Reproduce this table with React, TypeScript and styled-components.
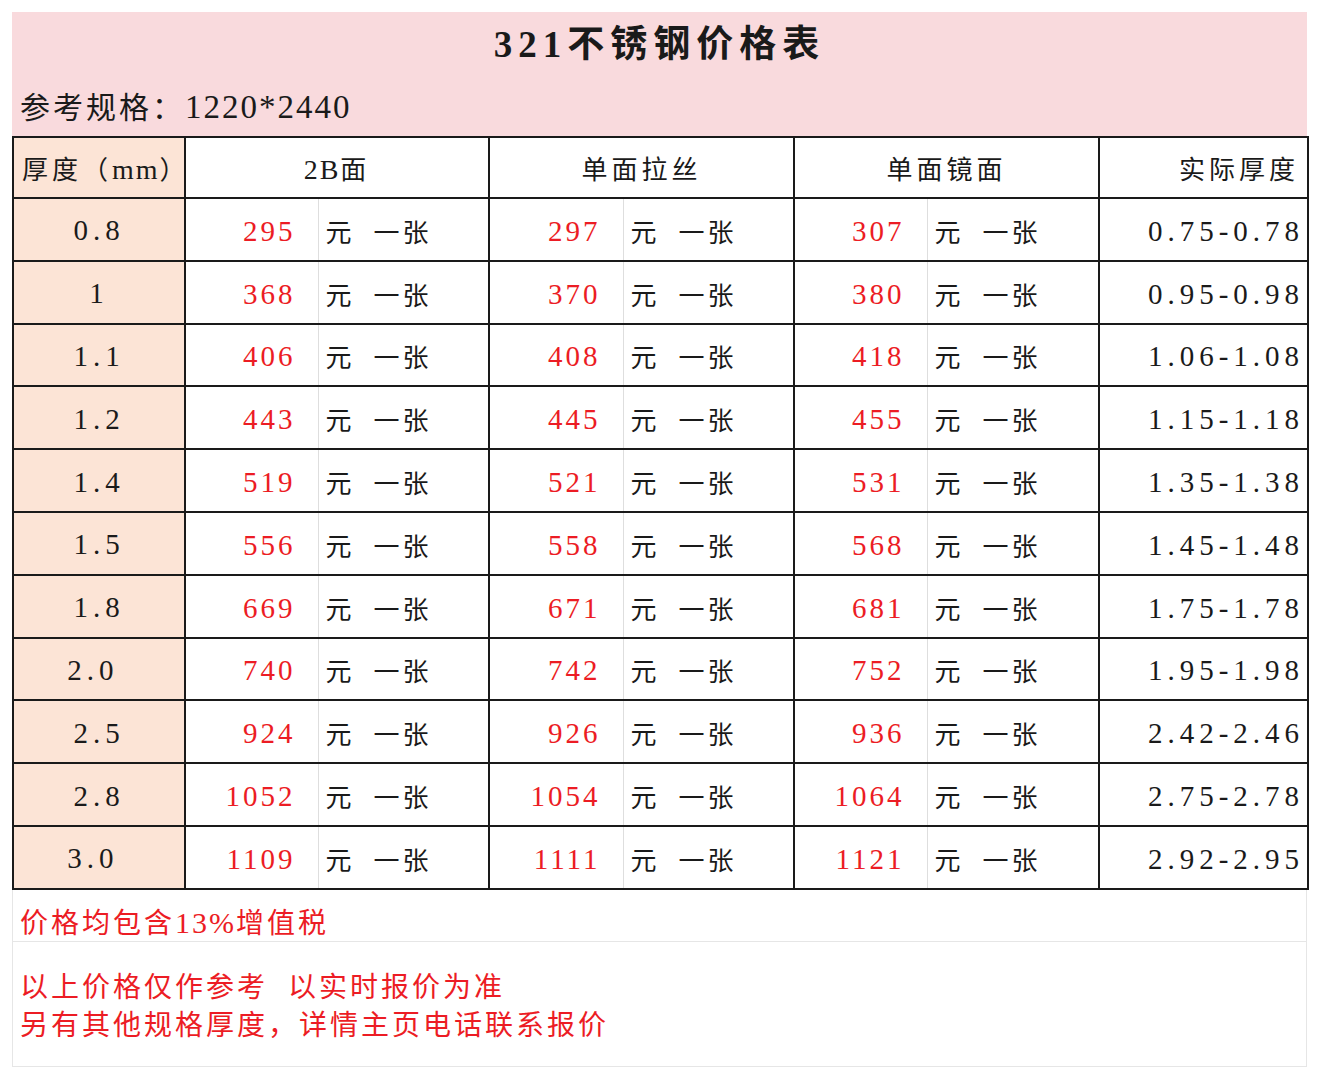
import React from 'react';
import styled, { createGlobalStyle } from 'styled-components';

const Global = createGlobalStyle`
  html, body {
    margin: 0;
    padding: 0;
    background: #ffffff;
  }
  body {
    font-family: "Liberation Serif", "Noto Sans CJK SC", serif;
    color: #1a1a1a;
  }
`;

const Sheet = styled.div`
  width: 1295px;
  margin: 12px 0 0 12px;
`;

const Banner = styled.div`
  display: flex;
  flex-direction: column;
  background: #f9dadd;
  padding: 12px 0 8px 0;
`;

const Title = styled.h1`
  margin: 0;
  text-align: center;
  font-size: 37px;
  line-height: 42px;
  font-weight: 700;
  letter-spacing: 6px;
`;

const Spec = styled.div`
  padding: 21px 0 0 8px;
  font-size: 30px;
  line-height: 40px;
  letter-spacing: 3px;
`;

const Num = styled.span<{ $size: number }>`
  font-size: ${p => p.$size}px;
  letter-spacing: 2px;
`;

const Table = styled.table`
  width: 1295px;
  border-collapse: collapse;
  table-layout: fixed;
  border: 2px solid #1a1a1a;
`;

const HeadCell = styled.th<{ $align?: string; $peach?: boolean }>`
  height: 59px;
  padding: 0 8px;
  border: 2px solid #1a1a1a;
  background: ${p => (p.$peach ? '#fce4d6' : '#ffffff')};
  text-align: ${p => p.$align || 'center'};
  font-size: 26px;
  font-weight: 400;
  letter-spacing: 4px;
  white-space: nowrap;
`;

const Row = styled.tr`
  height: 62.8px;
`;

const SizeCell = styled.td`
  background: #fce4d6;
  border: 2px solid #1a1a1a;
  padding-top: 4px;
  text-align: center;
  font-size: 29px;
  letter-spacing: 5px;
  white-space: pre;
`;

const PriceCell = styled.td`
  border-top: 2px solid #1a1a1a;
  border-bottom: 2px solid #1a1a1a;
  border-right: 1px solid #dedede;
  padding: 4px 22px 0 0;
  text-align: right;
  color: #ec1c24;
  font-size: 29px;
  letter-spacing: 3px;
`;

const UnitCell = styled.td`
  border-top: 2px solid #1a1a1a;
  border-bottom: 2px solid #1a1a1a;
  border-right: 2px solid #1a1a1a;
  padding: 2px 0 0 7px;
  font-size: 26px;
  letter-spacing: 3px;
  white-space: nowrap;
`;

const Sheet2 = styled.span`
  margin-left: 19px;
`;

const ThickCell = styled.td`
  border: 2px solid #1a1a1a;
  padding: 4px 3px 0 0;
  text-align: right;
  font-size: 29px;
  letter-spacing: 5px;
`;

const Notes = styled.div`
  border-left: 1px solid #e6e6e6;
  border-right: 1px solid #e6e6e6;
  border-bottom: 1px solid #e6e6e6;
  color: #ec1c24;
  font-size: 28px;
  letter-spacing: 3px;
`;

const TaxLine = styled.div`
  height: 52px;
  padding: 13px 0 0 7px;
  box-sizing: border-box;
  line-height: 40px;
  border-bottom: 1px solid #e6e6e6;
`;

const Remarks = styled.div`
  height: 124px;
  padding: 27px 0 0 7px;
  box-sizing: border-box;
  line-height: 38px;
  white-space: pre;
`;

const widths = [172, 133, 171, 134, 171, 133, 172, 209];

const rows: [string, number, number, number, string][] = [
  ['0.8', 295, 297, 307, '0.75-0.78'],
  ['1', 368, 370, 380, '0.95-0.98'],
  ['1.1', 406, 408, 418, '1.06-1.08'],
  ['1.2', 443, 445, 455, '1.15-1.18'],
  ['1.4', 519, 521, 531, '1.35-1.38'],
  ['1.5', 556, 558, 568, '1.45-1.48'],
  ['1.8', 669, 671, 681, '1.75-1.78'],
  ['2.0 ', 740, 742, 752, '1.95-1.98'],
  ['2.5', 924, 926, 936, '2.42-2.46'],
  ['2.8', 1052, 1054, 1064, '2.75-2.78'],
  ['3.0 ', 1109, 1111, 1121, '2.92-2.95'],
];

const Unit = () => (
  <UnitCell>
    元<Sheet2>一张</Sheet2>
  </UnitCell>
);

export default function App() {
  return (
    <Sheet>
      <Global />
      <Banner>
        <Title>321不锈钢价格表</Title>
        <Spec>
          参考规格：<Num $size={33}>1220*2440</Num>
        </Spec>
      </Banner>
      <Table>
        <colgroup>
          {widths.map((w, i) => (
            <col key={i} style={{ width: w }} />
          ))}
        </colgroup>
        <thead>
          <tr>
            <HeadCell $peach $align="left">
              厚度（<Num $size={28}>mm</Num>）
            </HeadCell>
            <HeadCell colSpan={2}>
              <Num $size={28}>2B</Num>面
            </HeadCell>
            <HeadCell colSpan={2}>单面拉丝</HeadCell>
            <HeadCell colSpan={2}>单面镜面</HeadCell>
            <HeadCell $align="right">实际厚度</HeadCell>
          </tr>
        </thead>
        <tbody>
          {rows.map(r => (
            <Row key={r[0]}>
              <SizeCell>{r[0]}</SizeCell>
              <PriceCell>{r[1]}</PriceCell>
              <Unit />
              <PriceCell>{r[2]}</PriceCell>
              <Unit />
              <PriceCell>{r[3]}</PriceCell>
              <Unit />
              <ThickCell>{r[4]}</ThickCell>
            </Row>
          ))}
        </tbody>
      </Table>
      <Notes>
        <TaxLine>
          价格均包含<Num $size={30}>13%</Num>增值税
        </TaxLine>
        <Remarks>
          {'以上价格仅作参考  以实时报价为准\n另有其他规格厚度，详情主页电话联系报价'}
        </Remarks>
      </Notes>
    </Sheet>
  );
}
